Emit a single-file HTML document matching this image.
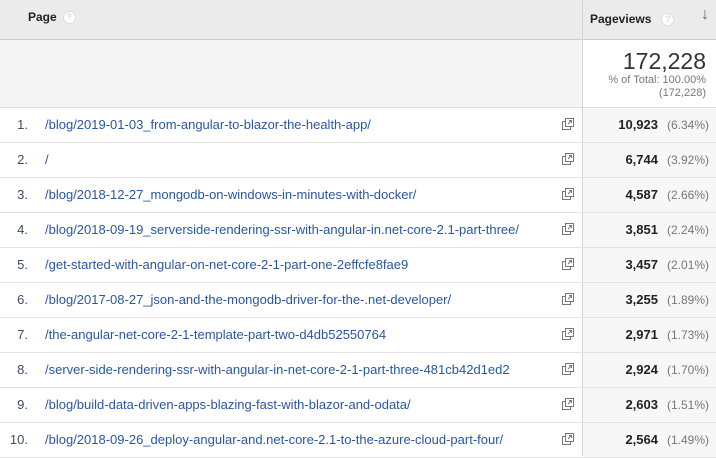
<!DOCTYPE html>
<html><head><style>
body{margin:0;width:716px;height:456px;overflow:hidden;background:#fff;font-family:"Liberation Sans",sans-serif;font-size:13px;color:#222;}
.hdr{position:absolute;left:0;top:0;width:716px;height:39px;background:#ebebeb;border-bottom:1px solid #ccc;}
.vline{position:absolute;left:582px;top:0;width:1px;height:456px;background:#d4d4d4;}
.q{display:inline-block;width:11px;height:11px;border-radius:50%;background:#fff;border:1px solid #ddd;color:#ccc;font-size:9px;text-align:center;line-height:11px;vertical-align:middle;margin-left:6px;font-weight:normal;}
.sum{position:absolute;left:0;top:40px;width:582px;height:67px;background:#f5f5f5;border-bottom:1px solid #ddd;}
.sumr{position:absolute;left:583px;top:40px;width:133px;height:67px;background:#fff;border-bottom:1px solid #ddd;text-align:right;}
.row{position:absolute;left:0;width:716px;height:34px;border-bottom:1px solid #e3e3e3;}
.row .n{position:absolute;left:0;width:28px;text-align:right;top:9px;color:#3b4a6b;}
.row .l{position:absolute;left:45px;top:9px;color:#2a57a0;}
.row .ic{position:absolute;left:562px;top:10px;}
.row .pv{position:absolute;left:583px;width:133px;height:34px;background:#f7f7f7;}
.row .v{position:absolute;right:58px;top:9px;font-weight:bold;color:#222;}
.row .p{position:absolute;right:7px;top:10px;color:#777;font-size:12px;}
</style></head><body>
<div class="hdr">
<div style="position:absolute;left:28px;top:10px;font-weight:bold;font-size:12px;">Page<span class="q">?</span></div>
<div style="position:absolute;left:590px;top:12px;font-weight:bold;font-size:12px;">Pageviews<span class="q" style="margin-left:10px">?</span></div>
<div style="position:absolute;left:701px;top:6px;color:#666;font-size:16px;">&#8595;</div>
</div>
<div class="sum"></div>
<div class="sumr">
<div style="position:absolute;right:10px;top:8px;font-size:23px;color:#333;">172,228</div>
<div style="position:absolute;right:10px;top:34px;font-size:11px;color:#777;">% of Total: 100.00%</div>
<div style="position:absolute;right:10px;top:47px;font-size:11px;color:#777;">(172,228)</div>
</div>
<div class="vline"></div>
<div id="rows"></div>
<script>
var d=[["/blog/2019-01-03_from-angular-to-blazor-the-health-app/","10,923","6.34%"],["/","6,744","3.92%"],["/blog/2018-12-27_mongodb-on-windows-in-minutes-with-docker/","4,587","2.66%"],["/blog/2018-09-19_serverside-rendering-ssr-with-angular-in.net-core-2.1-part-three/","3,851","2.24%"],["/get-started-with-angular-on-net-core-2-1-part-one-2effcfe8fae9","3,457","2.01%"],["/blog/2017-08-27_json-and-the-mongodb-driver-for-the-.net-developer/","3,255","1.89%"],["/the-angular-net-core-2-1-template-part-two-d4db52550764","2,971","1.73%"],["/server-side-rendering-ssr-with-angular-in-net-core-2-1-part-three-481cb42d1ed2","2,924","1.70%"],["/blog/build-data-driven-apps-blazing-fast-with-blazor-and-odata/","2,603","1.51%"],["/blog/2018-09-26_deploy-angular-and.net-core-2.1-to-the-azure-cloud-part-four/","2,564","1.49%"]];
var h="";var ic='<svg width="12" height="12" viewBox="0 0 12 12"><rect x="0.5" y="3.5" width="8" height="8" fill="#fff" stroke="#777"/><rect x="3.5" y="0.5" width="8" height="8" fill="#fff" stroke="#777"/><path d="M6 6L9.5 2.5M7 2.5H9.5V5" stroke="#777" fill="none"/></svg>';
d.forEach(function(r,i){h+='<div class="row" style="top:'+(108+i*35)+'px"><div class="pv"></div><span class="n">'+(i+1)+'.</span><span class="l">'+r[0]+'</span><span class="ic">'+ic+'</span><span class="v">'+r[1]+'</span><span class="p">('+r[2]+')</span></div>';});
document.getElementById("rows").innerHTML=h;
</script>
</body></html>
